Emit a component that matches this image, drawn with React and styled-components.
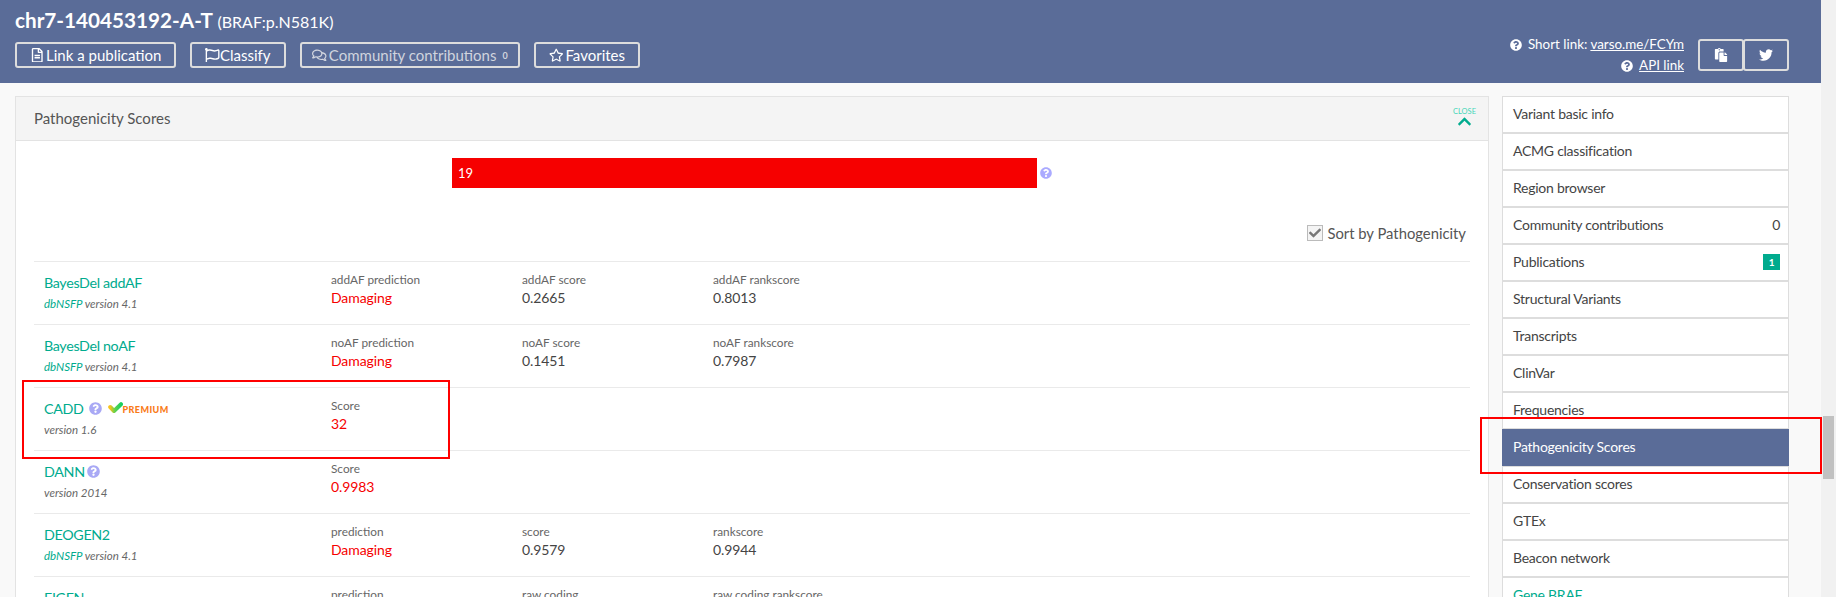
import React from 'react';
import styled, { createGlobalStyle } from 'styled-components';
import {
  FaRegFileAlt,
  FaRegFlag,
  FaRegComments,
  FaRegStar,
  FaQuestionCircle,
  FaPaste,
  FaTwitter,
  FaChevronUp,
  FaCheck,
} from 'react-icons/fa';

const HEADER = '#5a6c98';
const TEAL = '#00ab8e';

const GlobalStyle = createGlobalStyle`
  html, body {
    margin: 0;
    padding: 0;
    height: 597px;
    overflow: hidden;
    background: #f1f1f1;
    font-family: Lato, "Open Sans", sans-serif;
    color: #444;
  }
  * { box-sizing: border-box; }
`;

const Page = styled.div`
  position: relative;
  width: 1836px;
  height: 597px;
  overflow: hidden;
`;

const Content = styled.div`
  width: 1821px;
  height: 597px;
  background: #f9f9f9;
  overflow: hidden;
`;

const Header = styled.header`
  display: flex;
  justify-content: space-between;
  height: 83px;
  padding: 0 32px 0 15px;
  background: ${HEADER};
  color: #fff;
`;

const Title = styled.h1`
  margin: 7px 0 0;
  font-size: 20.7px;
  line-height: 26px;
  font-weight: 700;
`;

const Subtitle = styled.small`
  font-size: 16px;
  font-weight: 400;
`;

const Actions = styled.div`
  display: flex;
  gap: 14px;
  margin-top: 7px;
`;

const ActionBtn = styled.a`
  display: flex;
  align-items: center;
  justify-content: center;
  gap: ${(p) => (p.$tight ? 0 : 2)}px;
  width: ${(p) => p.$w}px;
  height: 26px;
  border: 2px solid #ddd;
  border-radius: 3px;
  font-size: 15px;
  color: ${(p) => (p.$muted ? '#d0d4de' : '#fff')};
  svg { font-size: 14.5px; }
`;

const Count = styled.span`
  font-size: 9px;
  font-weight: 700;
  margin-left: 4px;
`;

const HeaderRight = styled.div`
  display: flex;
  align-items: flex-start;
  gap: 14px;
  padding-top: 34px;
`;

const Links = styled.div`
  text-align: right;
  font-size: 13.4px;
  line-height: 21px;
`;

const LinkLine = styled.div`
  display: flex;
  justify-content: flex-end;
  align-items: center;
  gap: 6px;
  svg { font-size: 12px; }
  a { color: #fff; text-decoration: underline; }
`;

const IconGroup = styled.div`
  display: flex;
  margin-top: 5px;
`;

const IconBtn = styled.a`
  display: flex;
  align-items: center;
  justify-content: center;
  width: 46px;
  height: 32px;
  border: 2px solid #ddd;
  border-radius: 3px;
  font-size: 14px;
  color: #fff;
  & + & { margin-left: -1px; }
`;

const Main = styled.main`
  display: flex;
  gap: 13px;
  padding: 13px 32px 0 15px;
`;

const Panel = styled.section`
  width: 1474px;
  height: 520px;
  background: #fff;
  border: 1px solid #e3e3e3;
`;

const PanelHead = styled.div`
  display: flex;
  justify-content: space-between;
  align-items: center;
  height: 44px;
  padding: 0 12px 2px 18px;
  background: #f4f4f4;
  border-bottom: 1px solid #e3e3e3;
  font-size: 15px;
  color: #555;
`;

const Close = styled.div`
  display: flex;
  flex-direction: column;
  align-items: center;
  margin-top: 2px;
  font-size: 7.5px;
  line-height: 8px;
  color: #45d6b8;
  svg { font-size: 15px; color: ${TEAL}; margin-top: -2px; }
`;

const BarRow = styled.div`
  display: flex;
  justify-content: center;
  align-items: center;
  gap: 3px;
  margin-top: 17px;
  font-size: 12px;
  color: #aaaaff;
`;

const Bar = styled.div`
  width: 585px;
  height: 30px;
  padding-left: 6px;
  background: #f60000;
  color: #fff;
  font-size: 13px;
  line-height: 30px;
`;

const PanelBody = styled.div`
  padding: 0 18px;
`;

const SortRow = styled.div`
  display: flex;
  justify-content: flex-end;
  align-items: center;
  gap: 4px;
  height: 16px;
  margin-top: 37px;
  margin-bottom: 20px;
  padding-right: 4px;
  font-size: 14.8px;
  color: #555;
`;

const Checkbox = styled.span`
  display: flex;
  align-items: center;
  justify-content: center;
  width: 16px;
  height: 16px;
  background: #f4f4f4;
  border: 1px solid #bbb;
  font-size: 12px;
  color: #777;
`;

const Row = styled.div`
  display: grid;
  grid-template-columns: 287px 191px 191px 1fr;
  height: 63px;
  padding: 0 10px;
  border-top: 1px solid #eaeaea;
`;

const NameCell = styled.div`
  padding-top: 10px;
`;

const Name = styled.div`
  display: flex;
  align-items: center;
  gap: 2px;
  height: 20px;
  font-size: 14.3px;
  letter-spacing: -0.35px;
  color: ${TEAL};
`;

const Help = styled(FaQuestionCircle)`
  font-size: 13px;
  color: #a9a9f5;
  margin-left: ${(p) => p.$offset || 0}px;
`;

const Premium = styled.span`
  display: flex;
  align-items: flex-end;
  margin-left: 4px;
  font-size: 9px;
  font-weight: 900;
  letter-spacing: 0.4px;
  line-height: 9px;
  color: #f97a16;
`;

const Version = styled.div`
  margin-top: 3px;
  font-size: 11.5px;
  line-height: 18px;
  font-style: italic;
  color: #666;
  b { font-weight: 400; color: ${TEAL}; }
`;

const Cell = styled.div`
  padding-top: 10px;
`;

const Label = styled.div`
  font-size: 11.8px;
  line-height: 16px;
  color: #666;
`;

const Value = styled.div`
  font-size: 14px;
  line-height: 20px;
  letter-spacing: -0.1px;
  color: ${(p) => (p.$bad ? '#f60000' : '#444')};
`;

const Sidebar = styled.nav`
  width: 287px;
`;

const NavItem = styled.a`
  display: flex;
  justify-content: space-between;
  align-items: center;
  height: 37px;
  padding: 0 8px 2px 10px;
  background: ${(p) => (p.$active ? HEADER : '#fff')};
  border: 1px solid ${(p) => (p.$active ? HEADER : '#ddd')};
  font-size: 14px;
  letter-spacing: -0.25px;
  color: ${(p) => (p.$active ? '#fff' : p.$link ? TEAL : '#444')};
`;

const Badge = styled.span`
  width: 17px;
  height: 16px;
  background: ${TEAL};
  color: #fff;
  font-size: 10px;
  font-weight: 700;
  line-height: 16px;
  text-align: center;
`;

const Track = styled.div`
  position: absolute;
  top: 0;
  right: 0;
  width: 15px;
  height: 100%;
  background: #f1f1f1;
`;

const Thumb = styled.div`
  position: absolute;
  top: 416px;
  left: 2px;
  width: 11px;
  height: 63px;
  background: #c1c1c1;
`;

const Marker = styled.div`
  position: absolute;
  left: ${(p) => p.$x}px;
  top: ${(p) => p.$y}px;
  width: ${(p) => p.$w}px;
  height: ${(p) => p.$h}px;
  border: 2px solid #f00;
`;

const rows = [
  { name: 'BayesDel addAF', db: true, version: '4.1', cells: [['addAF prediction', 'Damaging', true], ['addAF score', '0.2665'], ['addAF rankscore', '0.8013']] },
  { name: 'BayesDel noAF', db: true, version: '4.1', cells: [['noAF prediction', 'Damaging', true], ['noAF score', '0.1451'], ['noAF rankscore', '0.7987']] },
  { name: 'CADD', help: 3, premium: true, version: '1.6', cells: [['Score', '32', true]] },
  { name: 'DANN', help: 0, version: '2014', cells: [['Score', '0.9983', true]] },
  { name: 'DEOGEN2', db: true, version: '4.1', cells: [['prediction', 'Damaging', true], ['score', '0.9579'], ['rankscore', '0.9944']] },
  { name: 'EIGEN', db: true, version: '4.1', cells: [['prediction', 'Damaging', true], ['raw coding', '0.8'], ['raw coding rankscore', '0.9']] },
];

const navItems = [
  { label: 'Variant basic info' },
  { label: 'ACMG classification' },
  { label: 'Region browser' },
  { label: 'Community contributions', count: '0' },
  { label: 'Publications', badge: '1' },
  { label: 'Structural Variants' },
  { label: 'Transcripts' },
  { label: 'ClinVar' },
  { label: 'Frequencies' },
  { label: 'Pathogenicity Scores', active: true },
  { label: 'Conservation scores' },
  { label: 'GTEx' },
  { label: 'Beacon network' },
  { label: 'Gene BRAF', link: true },
];

function PremiumMark() {
  return (
    <Premium>
      <svg width="15" height="12" viewBox="0 0 15 12">
        <defs>
          <linearGradient id="premium-check" x1="0" x2="1" y1="0" y2="0">
            <stop offset="0" stopColor="#f7c21c" />
            <stop offset="0.45" stopColor="#5ed24e" />
            <stop offset="1" stopColor="#1ccf5f" />
          </linearGradient>
        </defs>
        <path d="M2.2 5 L6 9 L13 2.2" fill="none" stroke="url(#premium-check)" strokeWidth="4" strokeLinecap="round" strokeLinejoin="round" />
      </svg>
      PREMIUM
    </Premium>
  );
}

export default function App() {
  return (
    <Page>
      <GlobalStyle />
      <Content>
        <Header>
          <div>
            <Title>chr7-140453192-A-T <Subtitle>(BRAF:p.N581K)</Subtitle></Title>
            <Actions>
              <ActionBtn $w={161}><FaRegFileAlt />Link a publication</ActionBtn>
              <ActionBtn $w={96} $tight><FaRegFlag />Classify</ActionBtn>
              <ActionBtn $w={220} $muted><FaRegComments />Community contributions <Count>0</Count></ActionBtn>
              <ActionBtn $w={106}><FaRegStar />Favorites</ActionBtn>
            </Actions>
          </div>
          <HeaderRight>
            <Links>
              <LinkLine><FaQuestionCircle /><span>Short link: <a>varso.me/FCYm</a></span></LinkLine>
              <LinkLine><FaQuestionCircle /><a>API link</a></LinkLine>
            </Links>
            <IconGroup>
              <IconBtn><FaPaste /></IconBtn>
              <IconBtn><FaTwitter /></IconBtn>
            </IconGroup>
          </HeaderRight>
        </Header>
        <Main>
          <Panel>
            <PanelHead>
              Pathogenicity Scores
              <Close>CLOSE<FaChevronUp /></Close>
            </PanelHead>
            <BarRow>
              <Bar>19</Bar>
              <FaQuestionCircle />
            </BarRow>
            <PanelBody>
              <SortRow>
                <Checkbox><FaCheck /></Checkbox>
                Sort by Pathogenicity
              </SortRow>
              {rows.map((row) => (
                <Row key={row.name}>
                  <NameCell>
                    <Name>
                      {row.name}
                      {row.help !== undefined && <Help $offset={row.help} />}
                      {row.premium && <PremiumMark />}
                    </Name>
                    <Version>{row.db && <b>dbNSFP </b>}version {row.version}</Version>
                  </NameCell>
                  {row.cells.map(([label, value, bad]) => (
                    <Cell key={label}>
                      <Label>{label}</Label>
                      <Value $bad={bad}>{value}</Value>
                    </Cell>
                  ))}
                </Row>
              ))}
            </PanelBody>
          </Panel>
          <Sidebar>
            {navItems.map((item) => (
              <NavItem key={item.label} $active={item.active} $link={item.link}>
                {item.label}
                {item.count && <span>{item.count}</span>}
                {item.badge && <Badge>{item.badge}</Badge>}
              </NavItem>
            ))}
          </Sidebar>
        </Main>
      </Content>
      <Track><Thumb /></Track>
      <Marker $x={22} $y={380} $w={428} $h={79} />
      <Marker $x={1480} $y={417} $w={342} $h={57} />
    </Page>
  );
}
